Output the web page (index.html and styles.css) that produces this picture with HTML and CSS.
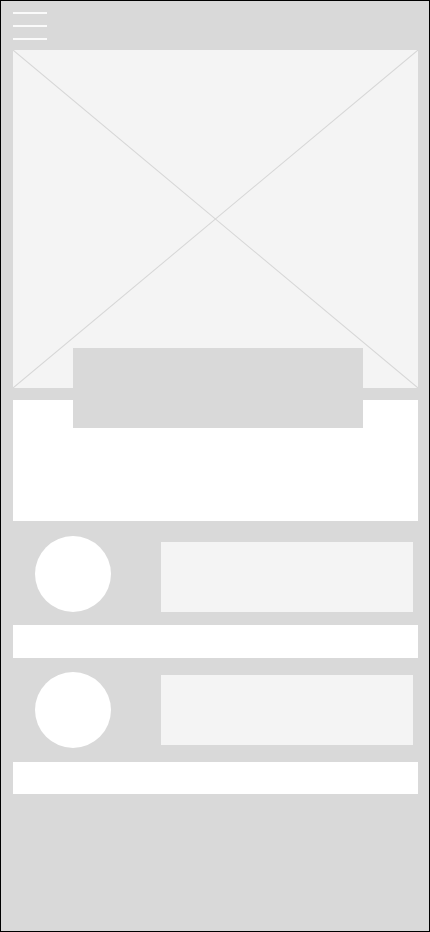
FILE: index.html
```html
<!DOCTYPE html>
<html>
<head>
<meta charset="utf-8">
<link rel="stylesheet" href="styles.css">
</head>
<body>
<div class="screen">
  <header class="topbar">
    <div class="burger"><span></span><span></span><span></span></div>
  </header>
  <div class="hero">
    <svg class="hero-x" viewBox="0 0 405 337" preserveAspectRatio="none">
      <line x1="0" y1="0" x2="405" y2="337"/>
      <line x1="405" y1="0" x2="0" y2="337"/>
    </svg>
    <div class="hero-caption"></div>
  </div>
  <div class="card"></div>
  <div class="item item-first">
    <div class="avatar"></div>
    <div class="item-text"></div>
  </div>
  <div class="bar"></div>
  <div class="item">
    <div class="avatar"></div>
    <div class="item-text"></div>
  </div>
  <div class="bar bar-last"></div>
</div>
</body>
</html>
```
FILE: styles.css
```css
* { box-sizing: border-box; }
html, body { margin: 0; padding: 0; }
body { font-family: "Liberation Sans", Arial, sans-serif; }
.screen {
  width: 430px;
  height: 932px;
  border: 1px solid #000;
  background: #d9d9d9;
  padding: 0 11px 0 12px;
  display: flex;
  flex-direction: column;
}
.topbar {
  height: 49px;
  padding-top: 11px;
}
.burger {
  width: 34px;
  display: flex;
  flex-direction: column;
  gap: 11px;
}
.burger span {
  display: block;
  height: 2px;
  background: #fafafa;
}
.hero {
  position: relative;
  height: 338px;
  background: #f4f4f4;
}
.hero-x {
  display: block;
  width: 100%;
  height: 100%;
}
.hero-x line {
  stroke: #d6d6d6;
  stroke-width: 1;
}
.hero-caption {
  position: absolute;
  left: 60px;
  top: 298px;
  width: 290px;
  height: 80px;
  background: #d9d9d9;
  z-index: 2;
}
.card {
  margin-top: 12px;
  height: 121px;
  background: #fff;
}
.item {
  height: 104px;
  display: flex;
  align-items: center;
  padding: 0 5px 0 22px;
  gap: 50px;
}
.avatar {
  flex: none;
  width: 76px;
  height: 76px;
  border-radius: 50%;
  background: #fff;
}
.item-text {
  flex: 1;
  height: 70px;
  background: #f4f4f4;
}
.item-first { align-items: flex-start; }
.item-first .avatar { margin-top: 15px; }
.item-first .item-text { margin-top: 21px; }
.bar {
  height: 33px;
  background: #fff;
}
.bar-last { height: 32px; }
```
